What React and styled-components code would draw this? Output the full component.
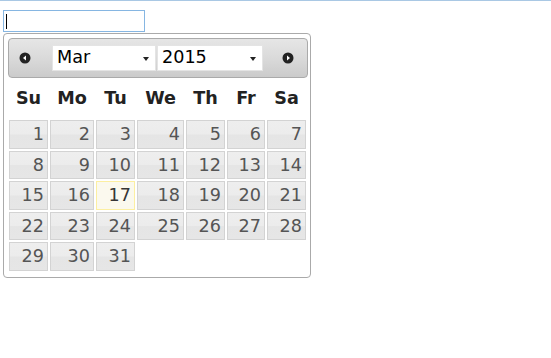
import styled, { createGlobalStyle } from "styled-components";

const GlobalStyle = createGlobalStyle`
  html, body {
    margin: 0;
    padding: 0;
    background: #fff;
  }
  body {
    font-family: "DejaVu Sans", Verdana, sans-serif;
  }
`;

const MONTHS = ["Jan", "Feb", "Mar", "Apr", "May", "Jun", "Jul", "Aug", "Sep", "Oct", "Nov", "Dec"];
const DAY_NAMES = ["Su", "Mo", "Tu", "We", "Th", "Fr", "Sa"];
const COLUMNS = "39px 44px 39px 47px 39px 38px 39px";

const Page = styled.div`
  border-top: 1px solid #a9c8e4;
  padding: 9px 0 0 3px;
`;

const InputBox = styled.div`
  box-sizing: border-box;
  width: 142px;
  height: 22px;
  border: 1px solid #86b6e2;
  display: flex;
  align-items: center;
  padding-left: 2px;
`;

const Caret = styled.span`
  width: 1px;
  height: 15px;
  background: #000;
`;

const Picker = styled.div`
  box-sizing: border-box;
  width: 308px;
  height: 245px;
  margin-top: 1px;
  border: 1px solid #aaa;
  border-radius: 4px;
  padding: 4px 4px 0 4px;
  background: #fff;
  font-size: 17.6px;
`;

const Header = styled.div`
  box-sizing: border-box;
  height: 40px;
  width: 300px;
  border: 1px solid #aaa;
  border-radius: 4px;
  background: linear-gradient(#e6e6e6, #dadada 50%, #cbcbcb);
  display: flex;
  align-items: center;
  padding-left: 8px;
`;

const NavIcon = styled.svg`
  width: 16px;
  height: 16px;
  flex: none;
`;

const Select = styled.div`
  box-sizing: border-box;
  width: ${(p) => p.$w}px;
  height: 26px;
  margin-left: ${(p) => p.$ml}px;
  background: #fff;
  border: 1px solid #e4e4e4;
  display: flex;
  align-items: center;
  justify-content: space-between;
  padding: 0 6px 0 4px;
  color: #000;
  font-size: 17.6px;
  line-height: 1;
`;

const Arrow = styled.span`
  width: 0;
  height: 0;
  border-left: 3.5px solid transparent;
  border-right: 3.5px solid transparent;
  border-top: 4px solid #222;
  margin-top: 2px;
`;

const Spacer = styled.span`
  width: 17px;
  flex: none;
`;

const Grid = styled.div`
  display: grid;
  grid-template-columns: ${COLUMNS};
  column-gap: 2px;
  margin-left: 1px;
`;

const DayName = styled.div`
  height: 41px;
  display: flex;
  align-items: center;
  justify-content: center;
  font-weight: bold;
  color: #222;
  padding-bottom: 1px;
  box-sizing: border-box;
`;

const Days = styled(Grid)`
  margin-top: 1px;
  row-gap: 2px;
  grid-auto-rows: 28.5px;
`;

const Day = styled.div`
  box-sizing: border-box;
  border: 1px solid ${(p) => (p.$today ? "#fcefa1" : "#d3d3d3")};
  background: ${(p) =>
    p.$today
      ? "#fbf9ee"
      : "linear-gradient(#eeeeee, #ececec 48%, #e5e5e5 52%, #e6e6e6)"};
  color: ${(p) => (p.$today ? "#363636" : "#555")};
  text-align: right;
  padding: 0 3px 0 0;
  line-height: 27px;
`;

function Nav({ dir }) {
  return (
    <NavIcon viewBox="0 0 16 16">
      <circle cx="8" cy="8" r="5.5" fill="#222" />
      {dir === "prev" ? (
        <path d="M6 8 L9 5.6 L9 10.4 Z" fill="#fff" />
      ) : (
        <path d="M10 8 L7 5.6 L7 10.4 Z" fill="#fff" />
      )}
    </NavIcon>
  );
}

export default function App() {
  const days = [];
  for (let i = 0; i < 31; i++) days.push(i + 1);
  // March 2015 starts on a Sunday
  return (
    <>
      <GlobalStyle />
      <Page>
        <InputBox>
          <Caret />
        </InputBox>
        <Picker>
          <Header>
            <Nav dir="prev" />
            <Select $w={104} $ml={19}>
              <span>{MONTHS[2]}</span>
              <Arrow />
            </Select>
            <Select $w={106} $ml={1}>
              <span>2015</span>
              <Arrow />
            </Select>
            <Spacer />
            <Nav dir="next" />
          </Header>
          <Grid>
            {DAY_NAMES.map((d) => (
              <DayName key={d}>{d}</DayName>
            ))}
          </Grid>
          <Days>
            {days.map((d) => (
              <Day key={d} $today={d === 17}>
                {d}
              </Day>
            ))}
          </Days>
        </Picker>
      </Page>
    </>
  );
}
